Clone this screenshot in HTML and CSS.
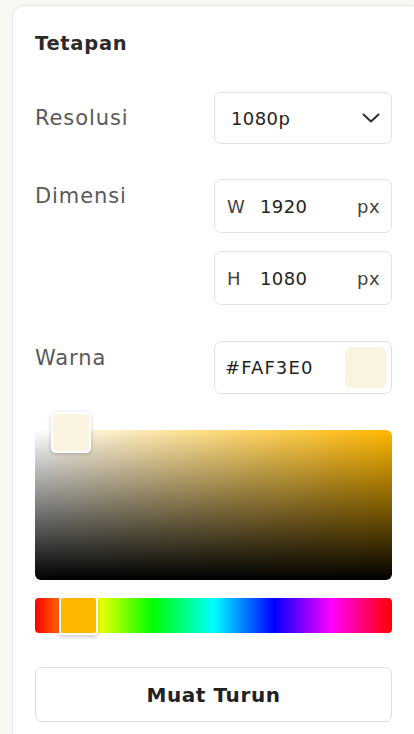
FILE: index.html
```html
<!DOCTYPE html>
<html lang="id">
<head>
<meta charset="utf-8">
<title>Tetapan</title>
<link rel="stylesheet" href="styles.css">
</head>
<body>
<div class="page">
  <section class="card">
    <h2 class="title">Tetapan</h2>

    <div class="row">
      <div class="label">Resolusi</div>
      <div class="field select">
        <span class="val">1080p</span>
        <svg class="chev" width="18" height="10" viewBox="0 0 18 10"><path d="M1.5 1.5 L9 8.5 L16.5 1.5" fill="none" stroke="#2b2d3a" stroke-width="2" stroke-linecap="round" stroke-linejoin="round"/></svg>
      </div>
    </div>

    <div class="row dims">
      <div class="label">Dimensi</div>
      <div class="stack">
        <div class="field"><span class="axis">W</span><span class="num">1920</span><span class="unit">px</span></div>
        <div class="field"><span class="axis">H</span><span class="num">1080</span><span class="unit">px</span></div>
      </div>
    </div>

    <div class="row color">
      <div class="label">Warna</div>
      <div class="field hex">
        <span class="val">#FAF3E0</span>
        <span class="swatch"></span>
      </div>
    </div>

    <div class="sv">
      <span class="sv-handle"></span>
    </div>

    <div class="hue">
      <span class="hue-handle"></span>
    </div>

    <button class="btn">Muat Turun</button>
  </section>
</div>
</body>
</html>
```

FILE: styles.css
```css
* { box-sizing: border-box; }
html, body { margin: 0; padding: 0; }
body {
  background: #f8f7f3;
  font-family: "DejaVu Sans", "Open Sans", sans-serif;
  color: #2b2b2b;
  overflow: hidden;
  width: 414px;
  height: 734px;
}
.page {
  padding: 5px 0 0 12px;
}
.card {
  width: 410px;
  background: #fff;
  border: 1px solid #e4e4e4;
  border-radius: 12px;
  padding: 24px 0 40px 22px;
  min-height: 740px;
}
.title {
  margin: 0 0 34px 0;
  font-size: 19.5px;
  font-weight: 700;
  letter-spacing: 0.7px;
  color: #2d2a28;
  line-height: 28px;
}
.row {
  display: flex;
  width: 357px;
  justify-content: space-between;
  align-items: center;
}
.label {
  font-size: 21px;
  letter-spacing: 0.9px;
  color: #5a5a5a;
  font-weight: 400;
}
.field {
  width: 178px;
  height: 54px;
  border: 1px solid #e2e2e2;
  border-radius: 7px;
  display: flex;
  align-items: center;
  padding: 0 11px 0 16px;
  font-size: 18px;
  letter-spacing: 0.4px;
  color: #1f1f24;
}
.select { justify-content: space-between; height: 52px; }
.dims {
  margin-top: 35px;
  align-items: flex-start;
}
.dims .label { margin-top: 5px; }
.stack {
  display: flex;
  flex-direction: column;
  gap: 18px;
}
.stack .field { padding-left: 12px; }
.axis { color: #444; width: 33px; }
.num { flex: 1; }
.unit { color: #444; }
.color {
  margin-top: 36px;
  align-items: flex-start;
}
.color .label { margin-top: 5px; }
.hex { padding: 0 5px 0 10px; justify-content: space-between; letter-spacing: 1.1px; height: 53px; }
.swatch {
  width: 41px;
  height: 41px;
  border-radius: 6px;
  background: #faf3e0;
}
.sv {
  position: relative;
  margin-top: 36px;
  width: 357px;
  height: 150px;
  border-radius: 6px;
  background:
    linear-gradient(to top, #000 0%, rgba(0,0,0,0) 100%),
    linear-gradient(to right, #fff 0%, #ffb800 100%);
}
.sv-handle {
  position: absolute;
  left: 16px;
  top: -18px;
  width: 40px;
  height: 41px;
  border: 2px solid #fff;
  border-radius: 5px;
  background: #faf3e0;
  box-shadow: 0 1px 4px rgba(0,0,0,0.2);
}
.hue {
  position: relative;
  margin-top: 18px;
  width: 357px;
  height: 35px;
  border-radius: 4px;
  background: linear-gradient(to right, #ff0000 0%, #ffff00 17%, #00ff00 33%, #00ffff 50%, #0000ff 67%, #ff00ff 83%, #ff0000 100%);
}
.hue-handle {
  position: absolute;
  left: 24px;
  top: -2px;
  width: 39px;
  height: 39px;
  border: 2px solid #fff;
  border-radius: 4px;
  background: #ffb800;
  box-shadow: 0 2px 4px rgba(0,0,0,0.2);
}
.btn {
  display: block;
  margin-top: 34px;
  width: 357px;
  height: 55px;
  background: #fff;
  border: 1px solid #dedede;
  border-radius: 7px;
  font-family: inherit;
  font-size: 20px;
  font-weight: 700;
  letter-spacing: 0.6px;
  color: #222;
}
```
